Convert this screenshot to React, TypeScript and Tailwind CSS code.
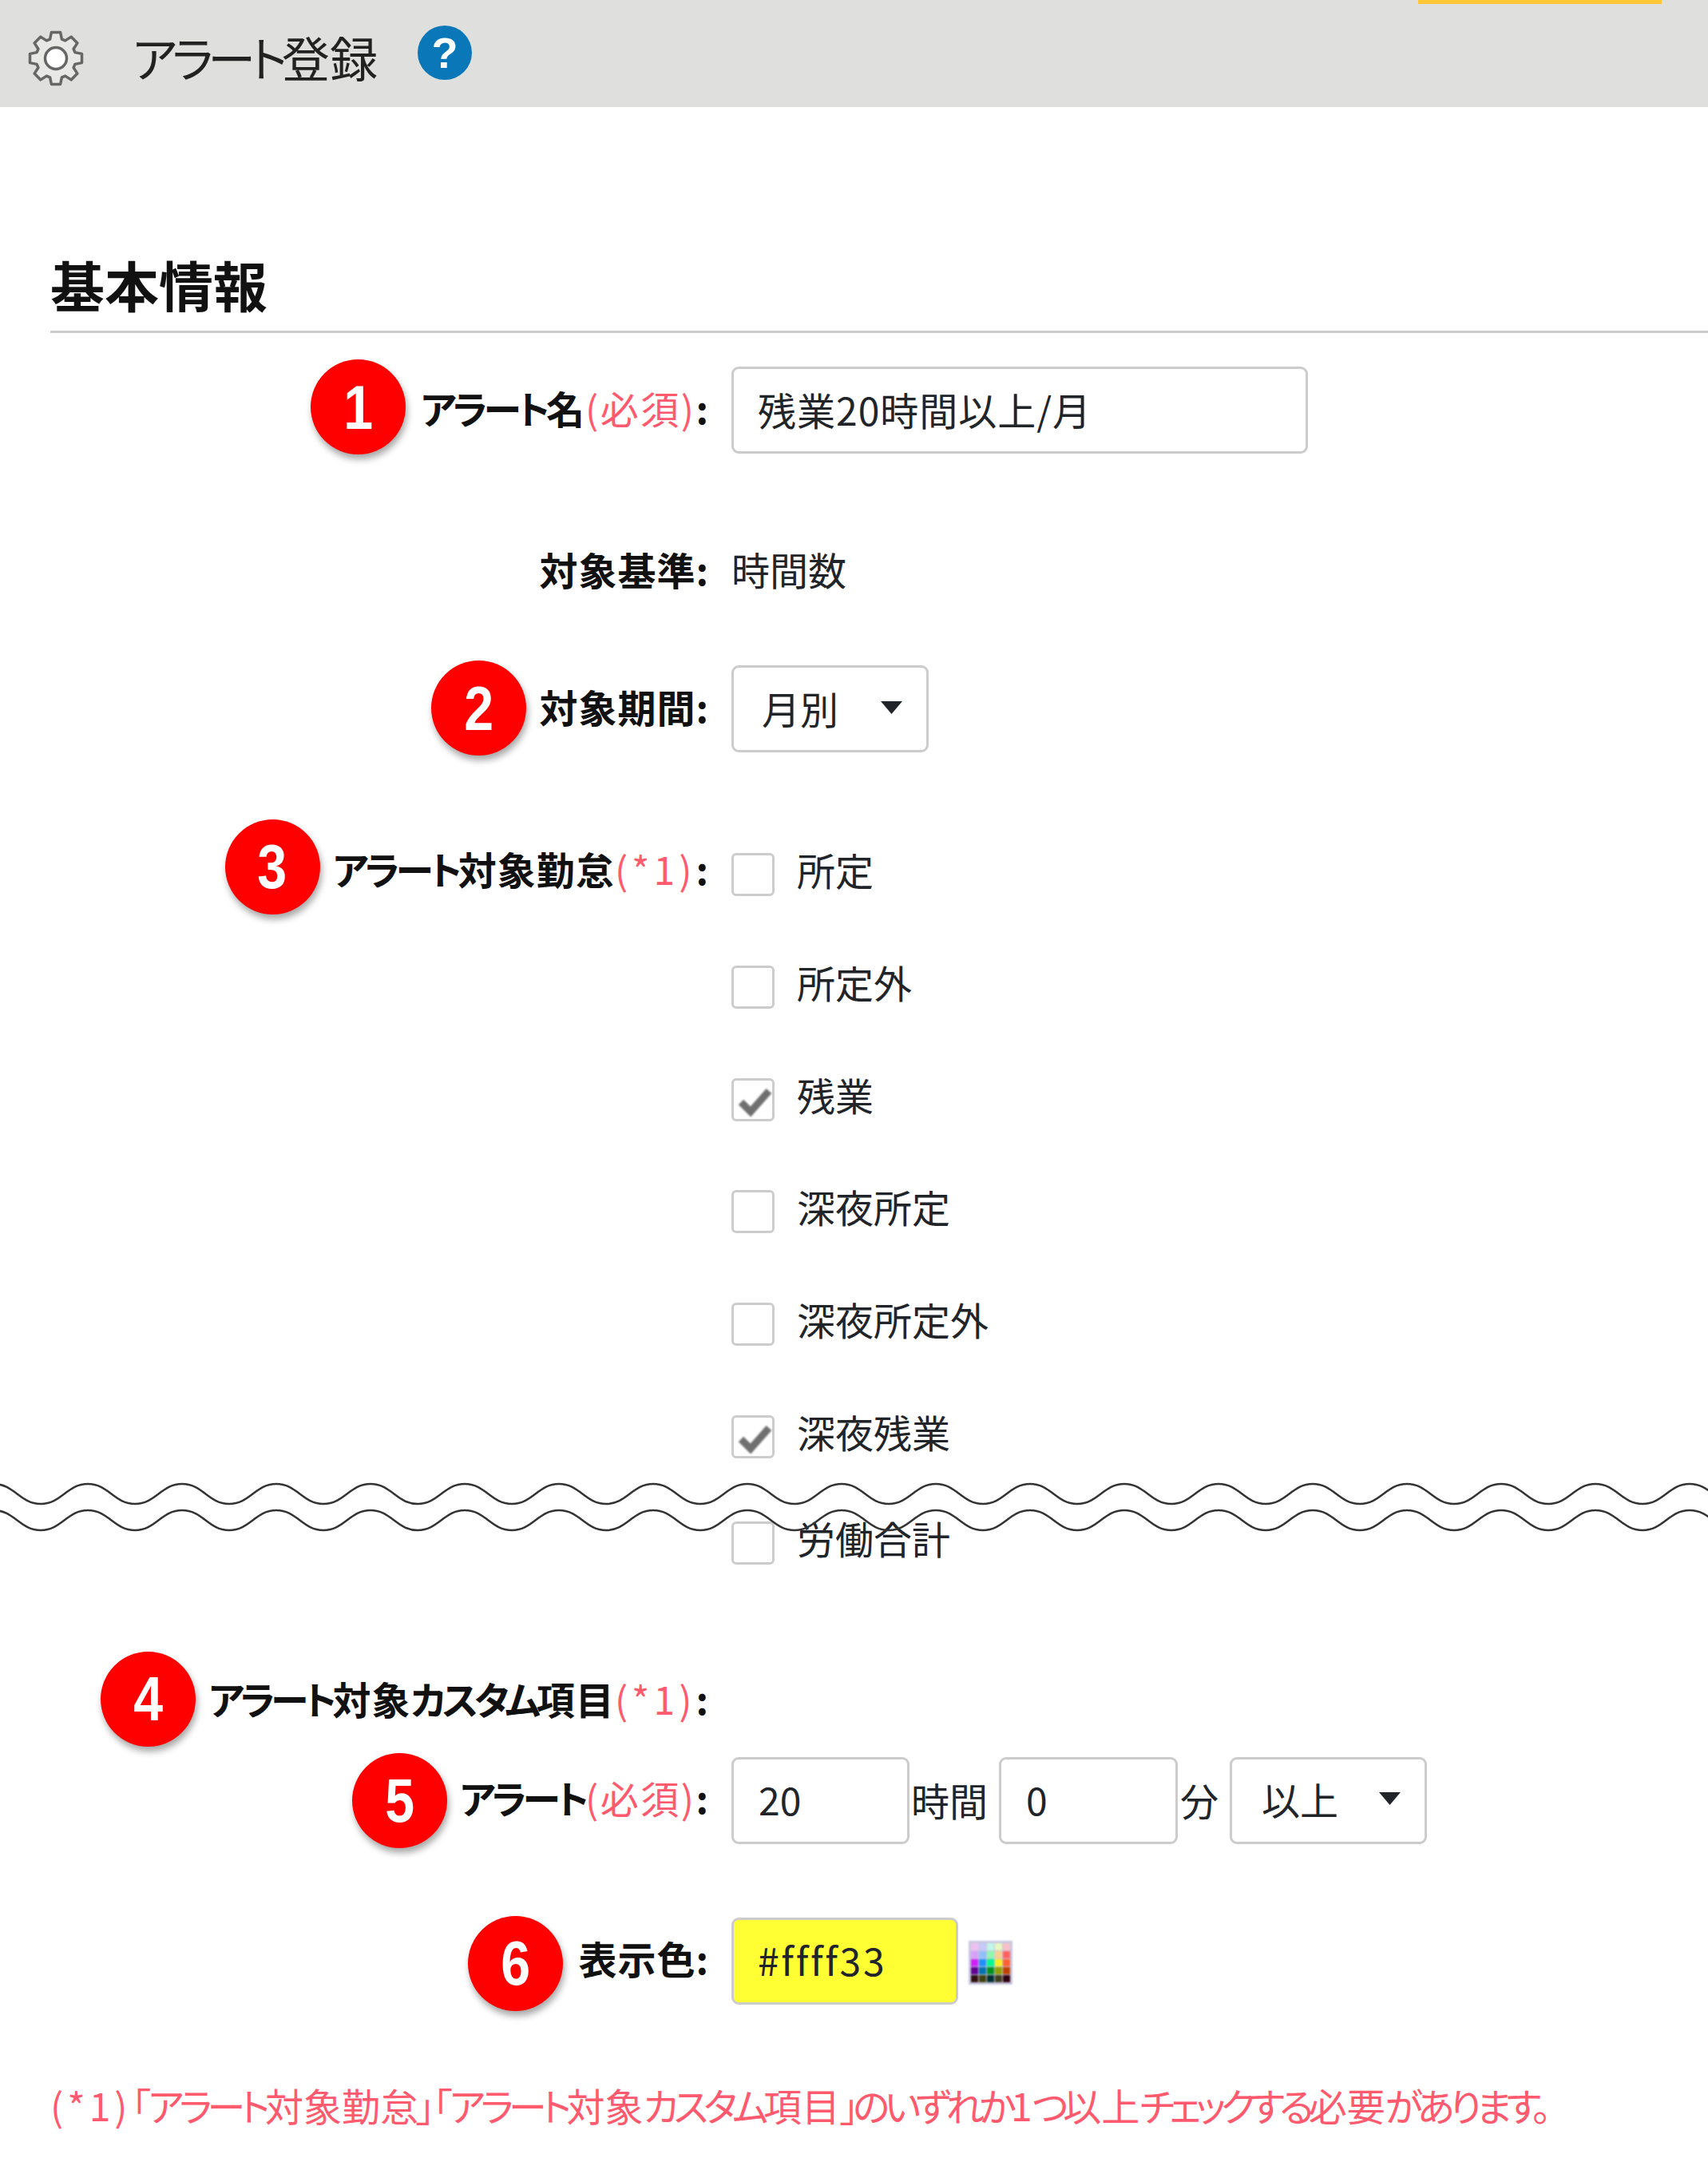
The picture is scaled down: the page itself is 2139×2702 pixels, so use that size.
const gearPath = () => {
  const cx = 35
  const cy = 35
  const pts: string[] = []
  for (let i = 0; i < 8; i++) {
    const a = (i * Math.PI) / 4 - Math.PI / 2
    const p = (r: number, d: number) => `${(cx + r * Math.cos(a + d)).toFixed(1)} ${(cy + r * Math.sin(a + d)).toFixed(1)}`
    pts.push(`${i === 0 ? "M" : "L"}${p(25, -0.3)}`, `L${p(33, -0.17)}`, `L${p(33, 0.17)}`, `L${p(25, 0.3)}`)
  }
  return pts.join(" ") + "Z"
}

const wavePath = (y: number) => {
  const top = y
  const bottom = y + 25
  let d = `M-67 ${bottom}`
  for (let x = -67; x < 2200; x += 118) {
    d += ` C${x + 26} ${bottom} ${x + 33} ${top} ${x + 59} ${top} C${x + 85} ${top} ${x + 92} ${bottom} ${x + 118} ${bottom}`
  }
  return d
}

const swatchColors = [
  "bg-[#f0c0f0]", "bg-[#c8c8f8]", "bg-[#c0f8e8]", "bg-[#e8f8c0]", "bg-[#f8c0c8]",
  "bg-[#d8a0f8]", "bg-[#90c0f8]", "bg-[#90f8b0]", "bg-[#f8d090]", "bg-[#ff6060]",
  "bg-[#d020f8]", "bg-[#2090f8]", "bg-[#00f890]", "bg-[#f8f020]", "bg-[#ff6030]",
  "bg-[#600090]", "bg-[#0070b0]", "bg-[#009020]", "bg-[#90a000]", "bg-[#c04000]",
  "bg-[#301010]", "bg-[#404010]", "bg-[#003030]", "bg-[#404020]", "bg-[#300010]",
]

function Badge({ n, className }: { n: number; className: string }) {
  return (
    <div className={`w-[119px] h-[119px] shrink-0 rounded-full bg-[#ff0000] text-white flex items-center justify-center font-['Liberation_Sans',sans-serif] font-bold text-[78px] leading-none shadow-[2px_6px_8px_rgba(0,0,0,0.35)] ${className}`}>
      <span className="inline-block scale-x-[0.85]">{n}</span>
    </div>
  )
}

// the original font sets kana much narrower than the kanji
function Kana({ children }: { children: string }) {
  return <span className="tracking-[-4.5px]">{children}</span>
}

function Required() {
  return <span className="font-normal text-[#ff5a6e] tracking-[2.5px]">(必須)</span>
}

function Star() {
  return <span className="font-normal text-[#ff5a6e] tracking-[5px]">(*1)</span>
}

function Label({ n, badgeClass, children }: { n?: number; badgeClass?: string; children: React.ReactNode }) {
  return (
    <div className="w-[825px] shrink-0 flex justify-end items-center gap-4">
      {n ? <Badge n={n} className={badgeClass ?? ""} /> : null}
      <div className="h-[60px] font-bold text-[48px] leading-[52px] tracking-[1px] text-[#111] whitespace-nowrap">{children}</div>
    </div>
  )
}

function Field({ className, children }: { className: string; children: string }) {
  return (
    <div className={`h-[109px] shrink-0 border-[3px] border-[#ccc] rounded-[9px] flex items-center pb-[4px] text-[48px] text-[#212529] ${className}`}>
      {children}
    </div>
  )
}

function Select({ className, children }: { className: string; children: string }) {
  return (
    <div className={`h-[109px] shrink-0 border-[3px] border-[#ccc] rounded-[9px] flex items-center justify-between pr-[30px] pb-[4px] text-[48px] text-[#212529] ${className}`}>
      {children}
      <svg width="27" height="16" viewBox="0 0 27 16">
        <polygon points="0,0 27,0 13.5,16" fill="#212529" />
      </svg>
    </div>
  )
}

function Check({ label, checked, className }: { label: string; checked?: boolean; className?: string }) {
  return (
    <div className={`flex items-start h-[54px] ${className ?? ""}`}>
      <div className="w-[54px] h-[54px] shrink-0 border-[3px] border-[#ccc] rounded-[6px] flex items-center justify-center">
        {checked ? (
          <svg width="54" height="54" viewBox="0 0 54 54" className="shrink-0 blur-[0.8px]">
            <path d="M12 30 L24 42 L47 16" fill="none" stroke="#6f6f6f" strokeWidth="9" />
          </svg>
        ) : null}
      </div>
      <span className="ml-[28px] -mt-[10px] text-[48px] leading-[60px] text-[#212529] whitespace-nowrap">{label}</span>
    </div>
  )
}

export default function App() {
  return (
    <div className="relative min-h-screen bg-white font-['Noto_Sans_CJK_JP',sans-serif] [font-feature-settings:'palt'] overflow-hidden">
      <header className="h-[134px] bg-[#dfdfdd] flex items-start">
        <svg width="70" height="70" viewBox="0 0 70 70" className="ml-[35px] mt-[38px] shrink-0 blur-[0.6px]">
          <path d={gearPath()} fill="#e8e8e6" stroke="#666" strokeWidth="3.5" strokeLinejoin="round" />
          <circle cx="35" cy="35" r="13.5" fill="#fff" stroke="#666" strokeWidth="3.5" />
        </svg>
        <h1 className="ml-[61px] mt-[36px] text-[60px] leading-[70px] font-normal text-[#222] whitespace-nowrap">
          <span className="tracking-[-6.5px]">アラート</span>登録
        </h1>
        <div className="ml-[50px] mt-[32px] w-[68px] h-[68px] rounded-full bg-[#0a78b8] text-white flex items-center justify-center font-['Liberation_Sans',sans-serif] font-bold text-[54px] leading-none">?</div>
        <div className="ml-auto mr-[58px] w-[305px] h-[5px] bg-[#ffc637]"></div>
      </header>

      <main className="pl-[63px] pb-[35px]">
        <h2 className="mt-[188px] pb-[24px] border-b-[3px] border-[#ccc] font-bold text-[68px] leading-[68px] text-[#111]">基本情報</h2>

        <div className="flex items-center mt-[42px]">
          <Label n={1} badgeClass="-mt-[30px] -mb-[22px] mr-[3px]"><Kana>アラート</Kana>名<Required />:</Label>
          <Field className="ml-[28px] w-[722px] pl-[30px] tracking-[1px]">残業20時間以上/月</Field>
        </div>

        <div className="flex items-center mt-[118px]">
          <Label>対象基準:</Label>
          <span className="ml-[28px] h-[60px] text-[48px] leading-[52px] text-[#212529]">時間数</span>
        </div>

        <div className="flex items-center mt-[87px]">
          <Label n={2} badgeClass="-mt-[27px] -mb-[25px]">対象期間:</Label>
          <Select className="ml-[28px] w-[247px] pl-[35px]">月別</Select>
        </div>

        <div className="flex items-start mt-[126px]">
          <div className="h-[54px] flex items-center -mt-[4px]">
            <Label n={3} badgeClass="-mt-[18px] -mb-[6px]"><Kana>アラート</Kana>対象勤怠<Star />:</Label>
          </div>
          <div className="ml-[28px] flex flex-col gap-[86.8px]">
            <Check label="所定" />
            <Check label="所定外" />
            <Check label="残業" checked />
            <Check label="深夜所定" />
            <Check label="深夜所定外" />
            <Check label="深夜残業" checked />
            <Check label="労働合計" className="-mt-[7.8px]" />
          </div>
        </div>

        <div className="flex items-center mt-[140px]">
          <Label n={4} badgeClass="-mt-[31px] -mb-[25px]">
            <span className="tracking-[-5px]">アラート</span>対象<span className="tracking-[-5px]">カスタム</span>項目<Star />:
          </Label>
        </div>

        <div className="flex items-center mt-[38px]">
          <Label n={5} badgeClass="-mt-[26px] -mb-[26px]"><Kana>アラート</Kana><Required />:</Label>
          <Field className="ml-[28px] w-[223px] pl-[31px]">20</Field>
          <span className="ml-[2px] w-[110px] pb-[2px] text-[48px] text-[#212529] whitespace-nowrap">時間</span>
          <Field className="w-[224px] pl-[31px]">0</Field>
          <span className="ml-[3px] w-[62px] pb-[2px] text-[48px] text-[#212529]">分</span>
          <Select className="w-[247px] pl-[37px]">以上</Select>
        </div>

        <div className="flex items-center mt-[92px]">
          <Label n={6} badgeClass="-mt-[23px] -mb-[29px] mr-[3px]">表示色:</Label>
          <Field className="ml-[28px] w-[284px] pl-[30px] bg-[#ffff33] tracking-[2.7px]">#ffff33</Field>
          <div className="ml-[13px] mt-[4px] w-[55px] h-[55px] p-[3px] bg-[#c8c8e0] grid grid-cols-5 gap-[1px] blur-[1px]">
            {swatchColors.map((c) => (
              <div key={c} className={c}></div>
            ))}
          </div>
        </div>

        <p className="mt-[95px] text-[48px] leading-[60px] text-[#ff5a6e] whitespace-nowrap">
          <span className="tracking-[5px]">(*1)</span>
          <span className="tracking-[-3px]">「</span>
          <span className="tracking-[-6px]">アラート</span>対象勤
          <span className="tracking-[-3px]">怠」「</span>
          <span className="tracking-[-6px]">アラート</span>対象
          <span className="tracking-[-6px]">カスタム</span>項目
          <span className="tracking-[-8px]">」</span>
          <span className="tracking-[-6.5px]">のいずれか</span>1
          <span className="tracking-[-6.5px]">つ</span>以上
          <span className="tracking-[-6.5px]">チェックする</span>必要
          <span className="tracking-[-6.5px]">があります。</span>
        </p>
      </main>

      {/* break marks drawn across the form */}
      <svg width="2139" height="64" viewBox="0 0 2139 64" className="absolute left-0 top-[1855px]">
        <path d={wavePath(3)} fill="none" stroke="#333" strokeWidth="2.5" />
        <path d={wavePath(36)} fill="none" stroke="#333" strokeWidth="2.5" />
      </svg>
    </div>
  )
}
